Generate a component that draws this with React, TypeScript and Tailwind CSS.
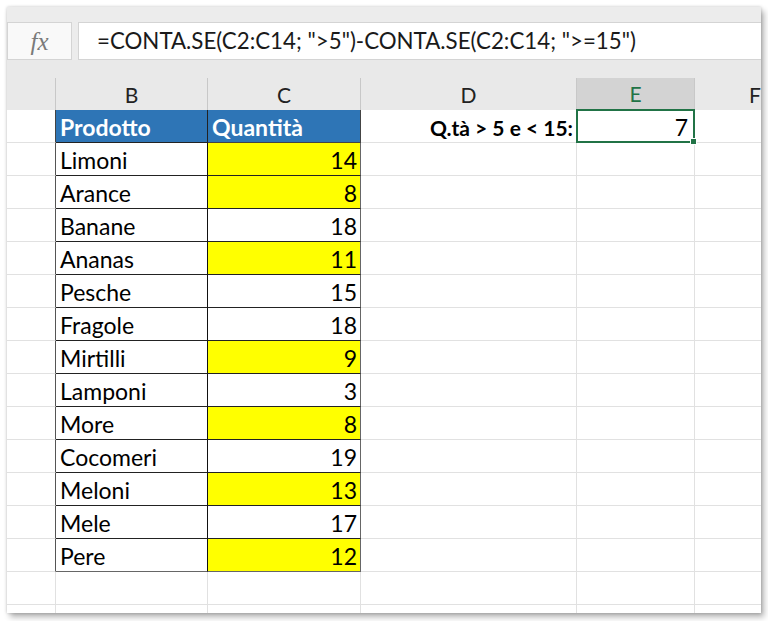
import React from "react";

const rows: [string, number, boolean][] = [
  ["Limoni", 14, true],
  ["Arance", 8, true],
  ["Banane", 18, false],
  ["Ananas", 11, true],
  ["Pesche", 15, false],
  ["Fragole", 18, false],
  ["Mirtilli", 9, true],
  ["Lamponi", 3, false],
  ["More", 8, true],
  ["Cocomeri", 19, false],
  ["Meloni", 13, true],
  ["Mele", 17, false],
  ["Pere", 12, true],
];

const font = { fontFamily: "Lato, 'Open Sans', sans-serif" };

function GridRow({ children, h = "h-[33px]" }: { children: React.ReactNode; h?: string }) {
  return <div className={`grid grid-cols-[49px_152px_153px_216px_118px_1fr] ${h}`}>{children}</div>;
}

export default function App() {
  return (
    <div className="w-[768px] h-[621px] bg-white pt-[7px] pl-[7px]" style={font}>
      <div className="w-[754px] h-[606px] bg-[#e9e9e9] overflow-hidden shadow-[0_0_3px_rgba(0,0,0,0.2),3px_4px_6px_rgba(0,0,0,0.3)] flex flex-col">
        {/* top strip */}
        <div className="h-[15px] bg-[#ececec] shrink-0" />
        {/* formula bar */}
        <div className="h-[38px] shrink-0 flex gap-[6px] bg-[#ececec]">
          <div className="w-[65px] h-full bg-[#f9f9f9] border border-[#d4d4d4] flex items-center justify-center">
            <span className="text-[25px] italic text-[#7a7a7a] leading-none" style={{ fontFamily: "'Liberation Serif', serif" }}>
              fx
            </span>
          </div>
          <div className="flex-1 h-full bg-white border border-[#d4d4d4] border-r-0 flex items-center pl-[18px]">
            <span className="text-[22.3px] text-[#1a1a1a] whitespace-pre leading-none">=CONTA.SE(C2:C14; "&gt;5")-CONTA.SE(C2:C14; "&gt;=15")</span>
          </div>
        </div>
        <div className="h-[18px] shrink-0" />
        {/* column headers */}
        <GridRow h="h-[32px]">
          <div className="border-r border-[#c8c8c8]" />
          <div className="border-r border-[#c8c8c8] border-b border-b-[#333] flex items-center justify-center text-[21px] text-[#222]">B</div>
          <div className="border-r border-[#c8c8c8] border-b border-b-[#333] flex items-center justify-center text-[21px] text-[#222]">C</div>
          <div className="border-r border-[#c8c8c8] border-b border-b-[#c8c8c8] flex items-center justify-center text-[21px] text-[#222]">D</div>
          <div className="bg-[#d3d3d3] border-r border-[#c8c8c8] border-b-2 border-b-[#217346] flex items-center justify-center text-[21px] text-[#217346]">E</div>
          <div className="border-b border-[#c8c8c8] flex items-center pl-[54px] text-[21px] text-[#222]">F</div>
        </GridRow>
        <div className="bg-white flex-1 flex flex-col">
          {/* table header row */}
          <GridRow>
            <div className="border-r border-r-[#444] border-b border-b-[#e1e1e1]" />
            <div className="bg-[#2e75b6] border-r border-b border-[#222] flex items-end pb-[3px] pl-[4px] text-white font-bold text-[23px] leading-none">Prodotto</div>
            <div className="bg-[#2e75b6] border-r border-b border-[#444] flex items-end pb-[3px] pl-[4px] text-white font-bold text-[23px] leading-none">Quantità</div>
            <div className="border-r border-b border-[#e1e1e1] flex items-end justify-end pb-[4px] pr-[3px] text-black font-bold text-[21px] leading-none">Q.tà &gt; 5 e &lt; 15:</div>
            <div className="relative border-r border-b border-[#e1e1e1] flex items-end justify-end pb-[3px] pr-[6px] text-black text-[23px] leading-none">
              7
              <div className="absolute -left-px -top-px -right-px -bottom-px border-2 border-[#217346]" />
              <div className="absolute -right-[3px] -bottom-[3px] w-[7px] h-[7px] bg-[#217346] border border-white" />
            </div>
            <div className="border-b border-[#e1e1e1]" />
          </GridRow>
          {rows.map(([name, qty, yellow], i) => {
            const last = i === rows.length - 1;
            return (
              <GridRow key={name}>
                <div className="border-r border-r-[#555] border-b border-b-[#e1e1e1]" />
                <div className={`border-r border-r-[#111] border-b ${last ? "border-b-[#666]" : "border-b-[#222]"} flex items-end pb-[3px] pl-[4px] text-black text-[23px] leading-none`}>{name}</div>
                <div className={`${yellow ? "bg-[#ffff00]" : "bg-white"} border-r border-r-[#666] border-b ${last ? "border-b-[#666]" : "border-b-[#222]"} flex items-end justify-end pb-[3px] pr-[3px] text-black text-[23px] leading-none`}>{qty}</div>
                <div className="border-r border-b border-[#e1e1e1]" />
                <div className="border-r border-b border-[#e1e1e1]" />
                <div className="border-b border-[#e1e1e1]" />
              </GridRow>
            );
          })}
          {[0, 1].map((k) => (
            <GridRow key={k}>
              <div className="border-r border-b border-[#e1e1e1]" />
              <div className="border-r border-b border-[#e1e1e1]" />
              <div className="border-r border-b border-[#e1e1e1]" />
              <div className="border-r border-b border-[#e1e1e1]" />
              <div className="border-r border-b border-[#e1e1e1]" />
              <div className="border-b border-[#e1e1e1]" />
            </GridRow>
          ))}
        </div>
      </div>
    </div>
  );
}
